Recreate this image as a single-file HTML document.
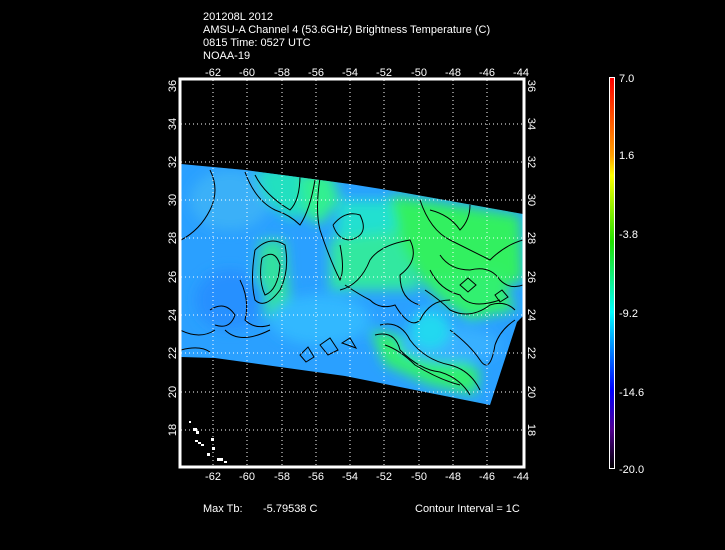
<!DOCTYPE html><html><head><style>body{margin:0;background:#000;width:725px;height:550px;overflow:hidden}svg{display:block}text{font-family:"Liberation Sans",sans-serif;fill:#fff;font-size:11px}</style></head><body>
<svg width="725" height="550" viewBox="0 0 725 550">
<defs>
<linearGradient id="cb" x1="0" y1="0" x2="0" y2="1">
<stop offset="0" stop-color="#ff0000"/><stop offset="0.2" stop-color="#ffa000"/><stop offset="0.25" stop-color="#ffff00"/><stop offset="0.42" stop-color="#20e000"/><stop offset="0.6" stop-color="#00ffff"/><stop offset="0.8" stop-color="#0000ff"/><stop offset="0.9" stop-color="#500090"/><stop offset="1" stop-color="#000"/>
</linearGradient>
<filter id="bl"><feGaussianBlur stdDeviation="6"/></filter>
<clipPath id="cp"><polygon points="181,164 245,170 350,184 400,192 523,214 523,316 517,322 490,405 440,395 380,383 345,376 280,367 215,358 181,357"/></clipPath>
</defs>
<text x="203" y="20">201208L 2012</text>
<text x="203" y="33">AMSU-A Channel 4 (53.6GHz) Brightness Temperature (C)</text>
<text x="203" y="46">0815 Time: 0527 UTC</text>
<text x="203" y="59">NOAA-19</text>
<g clip-path="url(#cp)">
<rect x="170" y="150" width="360" height="270" fill="#2aa0ff"/>
<g filter="url(#bl)">
<ellipse cx="230" cy="200" rx="40" ry="30" fill="#3ab0f8"/>
<polygon points="255,170 300,165 310,210 290,220 265,200" fill="#20e0c0"/>
<polygon points="300,175 330,170 340,200 320,225 305,215" fill="#30f090"/>
<polygon points="260,240 285,240 290,300 270,320 255,300" fill="#30e0a0"/>
<polygon points="340,200 420,200 410,240 360,250 335,235" fill="#20e0d0"/>
<polygon points="330,240 400,230 420,290 330,290" fill="#30e8a0"/>
<polygon points="390,195 520,215 523,280 470,300 420,280 400,240" fill="#30f060"/>
<polygon points="420,280 500,270 515,310 470,320 440,300" fill="#30f070"/>
<polygon points="370,330 420,340 480,370 475,395 430,385 385,365" fill="#30f070"/>
<ellipse cx="450" cy="345" rx="50" ry="18" fill="#38b0ff"/>
<ellipse cx="320" cy="320" rx="50" ry="25" fill="#30b8ff"/>
<ellipse cx="230" cy="300" rx="35" ry="30" fill="#2890ff"/>
<ellipse cx="430" cy="330" rx="20" ry="20" fill="#20d8f0"/>
</g>
<g stroke="#000" stroke-width="1" fill="none">
<path d="M181,240 Q200,230 210,210 Q220,190 210,170"/>
<path d="M245,172 Q255,200 275,210 Q290,215 300,225 Q310,210 315,180"/>
<path d="M255,175 Q265,195 290,210 Q300,200 300,175"/>
<path d="M320,178 Q315,210 320,230 Q330,260 340,280 Q345,270 340,245"/>
<path d="M255,250 Q270,235 285,245 Q290,270 280,290 Q265,310 255,300 Q250,280 255,250"/>
<path d="M262,258 Q275,248 280,265 Q278,290 265,295 Q258,280 262,258"/>
<path d="M240,280 Q250,300 245,320 Q255,330 270,325"/>
<path d="M210,310 Q225,300 235,315 Q230,330 215,325"/>
<path d="M180,330 Q200,340 215,330 M225,330 Q240,345 270,330"/>
<path d="M333,225 Q345,210 360,215 Q370,235 350,240 Q338,240 333,225"/>
<path d="M340,290 Q360,285 370,260 Q380,245 410,240 Q420,260 400,275 Q400,300 420,305"/>
<path d="M345,285 Q360,295 370,300 Q380,310 395,305 Q410,330 420,320 Q430,300 450,300"/>
<path d="M420,200 Q430,230 450,240 Q470,250 490,260 Q505,245 523,240"/>
<path d="M430,210 Q450,215 460,230 Q470,220 470,205"/>
<path d="M440,255 Q450,270 470,270 Q490,265 500,280 Q510,290 523,285"/>
<path d="M430,270 Q440,290 460,295 Q470,310 500,300"/>
<path d="M425,290 Q440,300 450,310 Q470,320 490,305 Q505,300 515,310"/>
<path d="M460,285 L468,278 L476,285 L468,292 Z M495,295 L502,290 L508,297 L500,302 Z"/>
<path d="M450,330 Q470,345 480,360 Q490,375 495,345 Q500,330 515,320"/>
<path d="M380,325 Q400,320 410,340 Q425,360 450,365 Q470,370 480,390"/>
<path d="M375,335 Q395,330 400,350 Q420,370 440,372 Q460,378 470,395"/>
<path d="M385,345 Q400,350 415,365 Q440,380 460,385"/>
<path d="M300,355 L308,347 L314,357 L306,362 Z M320,345 L330,338 L338,350 L328,355 Z M342,343 L350,338 L356,348 Z"/>
<path d="M181,350 Q200,345 210,352"/>
</g>
</g>
<g fill="#fff">
<rect x="189" y="421" width="2" height="2"/><rect x="193" y="428" width="4" height="3"/><rect x="196" y="431" width="3" height="3"/><rect x="195" y="440" width="3" height="2"/><rect x="198" y="442" width="3" height="2"/><rect x="201" y="444" width="3" height="2"/><rect x="211" y="438" width="3" height="3"/><rect x="212" y="447" width="3" height="3"/><rect x="207" y="453" width="3" height="3"/><rect x="217" y="458" width="6" height="3"/><rect x="224" y="461" width="3" height="2"/>
</g>
<rect x="180" y="79" width="344" height="388" fill="none" stroke="#fff" stroke-width="3"/>
<g stroke="#fff" stroke-dasharray="1,3" stroke-width="1">
<line x1="213" y1="80" x2="213" y2="466"/><line x1="247" y1="80" x2="247" y2="466"/><line x1="282" y1="80" x2="282" y2="466"/><line x1="316" y1="80" x2="316" y2="466"/><line x1="350" y1="80" x2="350" y2="466"/><line x1="384" y1="80" x2="384" y2="466"/><line x1="419" y1="80" x2="419" y2="466"/><line x1="453" y1="80" x2="453" y2="466"/><line x1="487" y1="80" x2="487" y2="466"/>
<line x1="181" y1="124" x2="523" y2="124"/><line x1="181" y1="162" x2="523" y2="162"/><line x1="181" y1="200" x2="523" y2="200"/><line x1="181" y1="238" x2="523" y2="238"/><line x1="181" y1="277" x2="523" y2="277"/><line x1="181" y1="315" x2="523" y2="315"/><line x1="181" y1="353" x2="523" y2="353"/><line x1="181" y1="392" x2="523" y2="392"/><line x1="181" y1="430" x2="523" y2="430"/>
</g>
<g text-anchor="middle">
<text x="213" y="76">-62</text><text x="247" y="76">-60</text><text x="282" y="76">-58</text><text x="316" y="76">-56</text><text x="350" y="76">-54</text><text x="384" y="76">-52</text><text x="419" y="76">-50</text><text x="453" y="76">-48</text><text x="487" y="76">-46</text><text x="521" y="76">-44</text>
<text x="213" y="480">-62</text><text x="247" y="480">-60</text><text x="282" y="480">-58</text><text x="316" y="480">-56</text><text x="350" y="480">-54</text><text x="384" y="480">-52</text><text x="419" y="480">-50</text><text x="453" y="480">-48</text><text x="487" y="480">-46</text><text x="521" y="480">-44</text>
</g>
<g text-anchor="middle">
<text transform="translate(176,86) rotate(-90)">36</text><text transform="translate(176,124) rotate(-90)">34</text><text transform="translate(176,162) rotate(-90)">32</text><text transform="translate(176,200) rotate(-90)">30</text><text transform="translate(176,238) rotate(-90)">28</text><text transform="translate(176,277) rotate(-90)">26</text><text transform="translate(176,315) rotate(-90)">24</text><text transform="translate(176,353) rotate(-90)">22</text><text transform="translate(176,392) rotate(-90)">20</text><text transform="translate(176,430) rotate(-90)">18</text>
<text transform="translate(528,86) rotate(90)">36</text><text transform="translate(528,124) rotate(90)">34</text><text transform="translate(528,162) rotate(90)">32</text><text transform="translate(528,200) rotate(90)">30</text><text transform="translate(528,238) rotate(90)">28</text><text transform="translate(528,277) rotate(90)">26</text><text transform="translate(528,315) rotate(90)">24</text><text transform="translate(528,353) rotate(90)">22</text><text transform="translate(528,392) rotate(90)">20</text><text transform="translate(528,430) rotate(90)">18</text>
</g>
<rect x="609.5" y="77.5" width="5" height="391" fill="url(#cb)" stroke="#fff"/>
<text x="619" y="82">7.0</text><text x="619" y="159">1.6</text><text x="619" y="238">-3.8</text><text x="619" y="317">-9.2</text><text x="619" y="396">-14.6</text><text x="619" y="473">-20.0</text>
<text x="203" y="512">Max Tb:</text><text x="263" y="512">-5.79538  C</text>
<text x="415" y="512">Contour Interval = 1C</text>
</svg></body></html>
